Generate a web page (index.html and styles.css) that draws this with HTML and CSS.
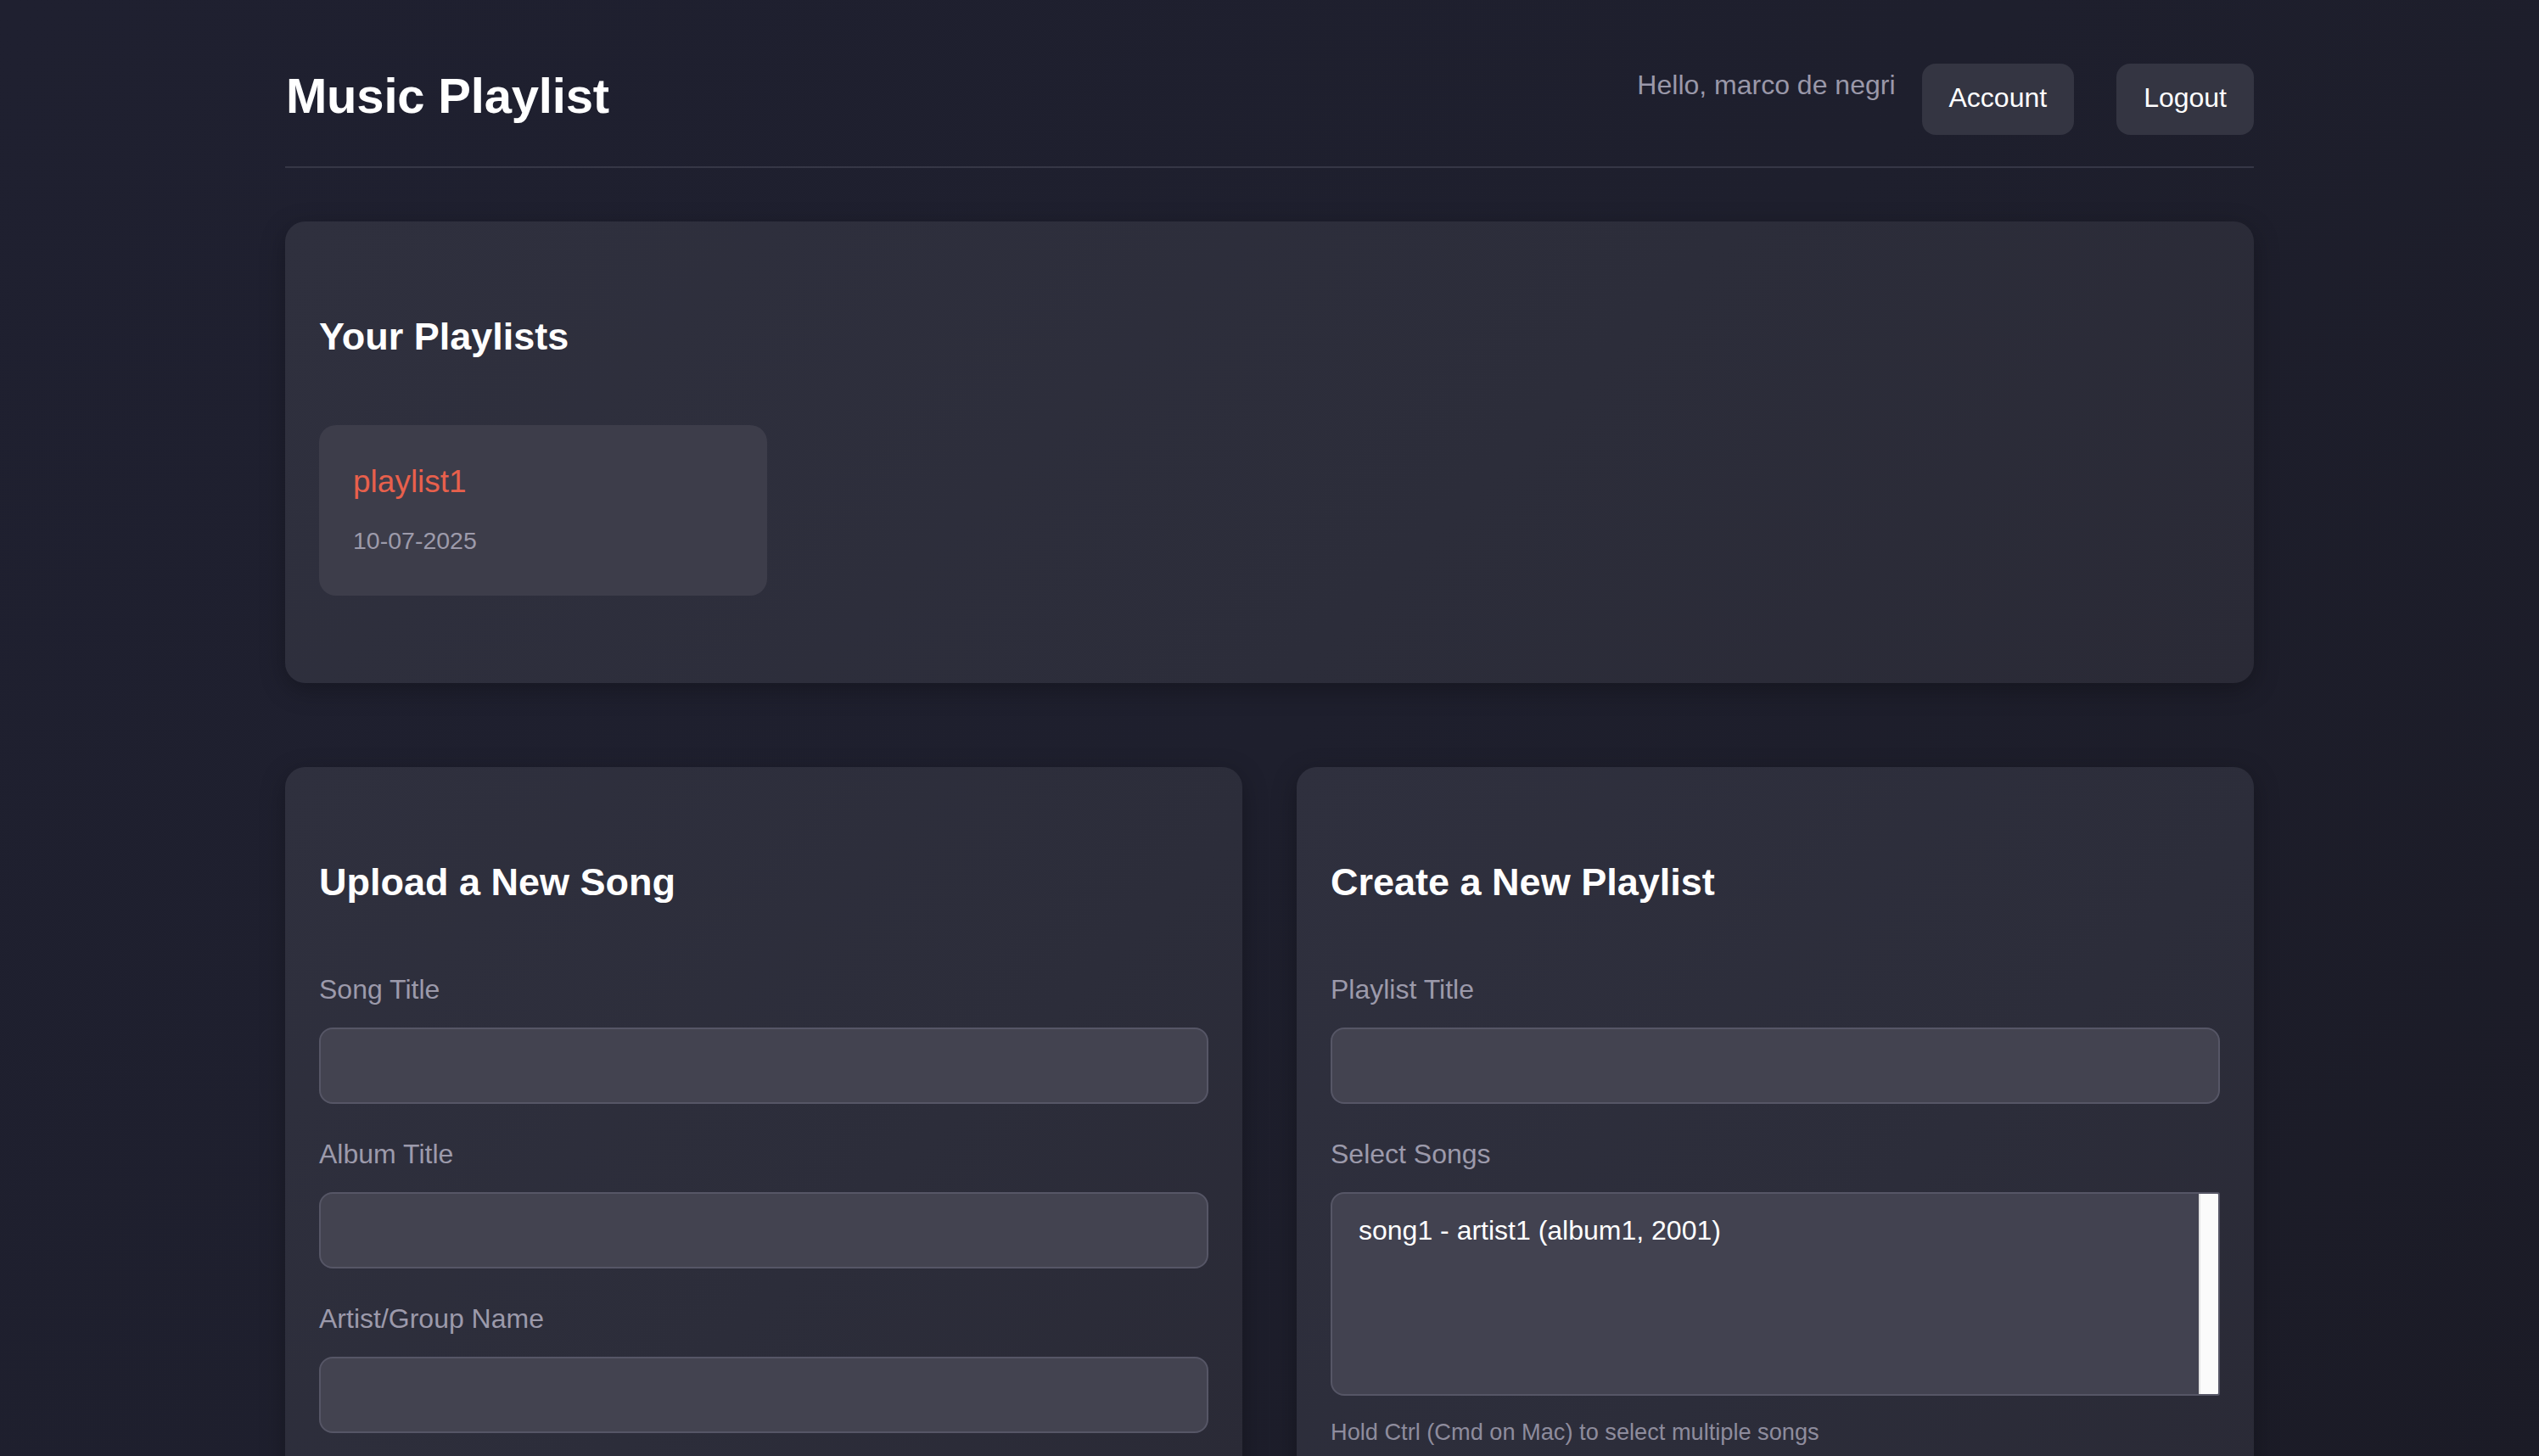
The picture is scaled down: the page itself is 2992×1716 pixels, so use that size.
FILE: index.html
```html
<!DOCTYPE html>
<html lang="en">
<head>
<meta charset="utf-8">
<title>Music Playlist</title>
<link rel="stylesheet" href="styles.css">
</head>
<body>
<div class="container">
  <header class="site-header">
    <h1 class="site-title">Music Playlist</h1>
    <nav class="user-nav">
      <span class="greeting">Hello, marco de negri</span>
      <button class="nav-btn" type="button">Account</button>
      <button class="nav-btn" type="button">Logout</button>
    </nav>
  </header>

  <main>
    <section class="card playlists-card">
      <h2 class="card-title">Your Playlists</h2>
      <div class="playlist-grid">
        <a class="playlist-item" href="#">
          <span class="playlist-name">playlist1</span>
          <span class="playlist-date">10-07-2025</span>
        </a>
      </div>
    </section>

    <div class="forms-grid">
      <section class="card form-card">
        <h2 class="card-title">Upload a New Song</h2>
        <form class="form">
          <div class="form-group">
            <label class="form-label" for="song-title">Song Title</label>
            <input class="form-input" id="song-title" type="text">
          </div>
          <div class="form-group">
            <label class="form-label" for="album-title">Album Title</label>
            <input class="form-input" id="album-title" type="text">
          </div>
          <div class="form-group">
            <label class="form-label" for="artist">Artist/Group Name</label>
            <input class="form-input" id="artist" type="text">
          </div>
        </form>
      </section>

      <section class="card form-card">
        <h2 class="card-title">Create a New Playlist</h2>
        <form class="form">
          <div class="form-group">
            <label class="form-label" for="playlist-title">Playlist Title</label>
            <input class="form-input" id="playlist-title" type="text">
          </div>
          <div class="form-group">
            <span class="form-label">Select Songs</span>
            <div class="song-select" role="listbox" aria-multiselectable="true">
              <ul class="song-options">
                <li class="song-option" role="option">song1 - artist1 (album1, 2001)</li>
              </ul>
              <div class="scroll-track"></div>
            </div>
            <p class="hint">Hold Ctrl (Cmd on Mac) to select multiple songs</p>
          </div>
        </form>
      </section>
    </div>
  </main>
</div>
</body>
</html>
```

FILE: styles.css
```css
* {
  box-sizing: border-box;
}

html {
  scrollbar-width: none;
}

html::-webkit-scrollbar {
  display: none;
}

body {
  margin: 0;
  min-height: 100vh;
  background: linear-gradient(135deg, #1f2030 0%, #1e1f2d 50%, #1b1b26 100%);
  font-family: "Liberation Sans", Arial, Helvetica, sans-serif;
  color: #ffffff;
}

.container {
  width: 2320px;
  margin: 0 auto;
  padding-top: 75px;
}

/* Header */
.site-header {
  display: flex;
  justify-content: space-between;
  align-items: flex-start;
  padding-bottom: 37px;
  border-bottom: 2px solid #363746;
}

.site-title {
  margin: 5px 0 0 1px;
  font-size: 58px;
  line-height: 66px;
  font-weight: 700;
  letter-spacing: -0.2px;
}

.user-nav {
  display: flex;
  align-items: flex-start;
  gap: 31px;
}

.greeting {
  margin-top: 7px;
  font-size: 32px;
  line-height: 36px;
  color: #9a98a9;
}

.nav-btn {
  background: #343542;
  color: #ffffff;
  border: none;
  border-radius: 16px;
  font-family: inherit;
  font-size: 32px;
  line-height: 36px;
  padding: 22px 32px 26px;
}

.nav-btn + .nav-btn {
  margin-left: 19px;
}

/* Cards */
.card {
  background: linear-gradient(135deg, #2f303e 0%, #2c2d3a 60%, #2a2a36 100%);
  border-radius: 24px;
  padding: 40px;
  box-shadow: 0 8px 30px rgba(0, 0, 0, 0.28);
}

.card-title {
  margin: 70px 0 78px;
  font-size: 45px;
  line-height: 52px;
  font-weight: 700;
}

.playlists-card {
  margin-top: 63px;
  padding-bottom: 103px;
}

.playlist-grid {
  display: grid;
  grid-template-columns: repeat(auto-fill, minmax(480px, 1fr));
  gap: 43px;
}

.playlist-item {
  display: flex;
  flex-direction: column;
  background: #3d3d4a;
  border-radius: 20px;
  padding: 46px 40px 49px;
  text-decoration: none;
}

.playlist-name {
  font-size: 37px;
  line-height: 42px;
  color: #e8604c;
  margin-bottom: 32px;
}

.playlist-date {
  font-size: 28.5px;
  line-height: 32px;
  color: #9d9bab;
}

/* Forms */
.forms-grid {
  display: grid;
  grid-template-columns: 1fr 1fr;
  gap: 64px;
  margin-top: 99px;
  align-items: start;
}

.form-card .card-title {
  margin-bottom: 82px;
}

.form {
  margin: 0;
}

.form-group {
  margin-bottom: 41px;
}

.form-label {
  display: block;
  font-size: 32px;
  line-height: 36px;
  color: #9c9aab;
  margin-bottom: 27px;
}

.form-input {
  display: block;
  width: 100%;
  height: 90px;
  background: #434350;
  border: 2px solid #565666;
  border-radius: 16px;
  color: #ffffff;
  font-family: inherit;
  font-size: 32px;
  padding: 0 30px;
}

.song-select {
  display: flex;
  height: 240px;
  background: #424250;
  border: 2px solid #565666;
  border-radius: 16px 3px 3px 16px;
  overflow: hidden;
}

.song-options {
  flex: 1;
  list-style: none;
  margin: 0;
  padding: 25px 31px;
}

.song-option {
  font-size: 32px;
  line-height: 36px;
  color: #ffffff;
}

.scroll-track {
  width: 23px;
  background: #fbfbfb;
  border-left: 2px solid #e2e2e2;
}

.hint {
  margin: 27px 0 0;
  font-size: 27.2px;
  line-height: 32px;
  color: #8e8c9d;
}
```
